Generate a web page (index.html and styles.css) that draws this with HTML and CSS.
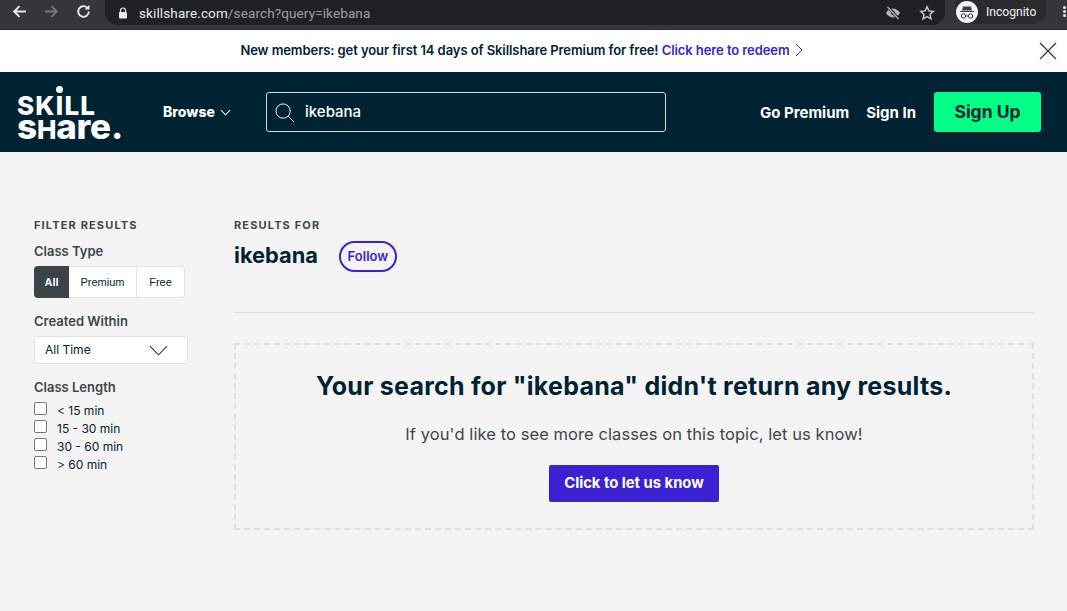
FILE: index.html
```html
<!DOCTYPE html>
<html lang="en">
<head>
<meta charset="utf-8">
<title>Skillshare search</title>
<link rel="stylesheet" href="styles.css">
</head>
<body>
<div class="chrome">
  <div class="chrome-nav">
    <svg class="cicon" viewBox="0 0 16 16"><path d="M14 8H3M8 3 3 8l5 5" fill="none" stroke="#e8eaed" stroke-width="1.8"/></svg>
    <svg class="cicon" viewBox="0 0 16 16"><path d="M2 8h11M8 3l5 5-5 5" fill="none" stroke="#77787b" stroke-width="1.8"/></svg>
    <svg class="cicon" viewBox="0 0 16 16"><path d="M13 8a5 5 0 1 1-1.5-3.6" fill="none" stroke="#e8eaed" stroke-width="1.8"/><path d="M13.6 1.6v4.6H9z" fill="#e8eaed"/></svg>
  </div>
  <div class="omnibox">
    <svg class="lock" viewBox="0 0 10 12"><path d="M2.5 5V3.5a2.5 2.5 0 0 1 5 0V5" fill="none" stroke="#e8eaed" stroke-width="1.2"/><rect x="1" y="5" width="8" height="6.5" rx="1" fill="#e8eaed"/></svg>
    <span class="url"><span class="url-host">skillshare.com</span>/search?query=ikebana</span>
    <span class="omni-right">
      <svg class="omni-icon" viewBox="0 0 16 16"><path d="M1 8s2.6-4.5 7-4.5S15 8 15 8s-2.600 4.500-7 4.500S1 8 1 8z" fill="#b5b6b8"/><circle cx="8" cy="8" r="2" fill="#202124"/><path d="M3 2l10.500 12" stroke="#202124" stroke-width="3"/><path d="M2.500 2l11 12" stroke="#b5b6b8" stroke-width="1.300"/></svg>
      <svg class="omni-icon" viewBox="0 0 16 16"><path d="M8 1.800l1.900 4.100 4.400.5-3.300 3 .9 4.400L8 11.600 4.100 13.800 5 9.400l-3.300-3 4.400-.5z" fill="none" stroke="#c4c5c7" stroke-width="1.500"/></svg>
    </span>
  </div>
  <div class="incognito">
    <span class="incog-badge">
      <svg viewBox="0 0 22 22"><path d="M4 10h14v1H4zM7 5.500h8l1 4H6z" fill="#3c4043"/><circle cx="7.500" cy="15" r="2.200" fill="none" stroke="#3c4043" stroke-width="1"/><circle cx="14.500" cy="15" r="2.200" fill="none" stroke="#3c4043" stroke-width="1"/><path d="M9.700 15h2.600" stroke="#3c4043"/></svg>
    </span>
    <span>Incognito</span>
  </div>
  <div class="kebab"><i></i><i></i><i></i></div>
</div>

<div class="promo">
  <span class="promo-text">New members: get your first 14 days of Skillshare Premium for free! <a class="promo-link">Click here to redeem</a></span>
  <svg class="promo-arrow" viewBox="0 0 8 14"><path d="M1 1l6 6-6 6" fill="none" stroke="#3a21d4" stroke-width="1"/></svg>
  <svg class="promo-close" viewBox="0 0 18 18"><path d="M1 1l16 16M17 1 1 17" stroke="#333" stroke-width="1.100"/></svg>
</div>

<header class="nav">
  <div class="logo">
    <div class="logo-top">SK<span class="logo-i">I</span>LL</div>
    <div class="logo-bottom">s<span class="logo-cap">H</span>are.</div>
  </div>
  <div class="browse"><span>Browse</span>
    <svg viewBox="0 0 12 7"><path d="M1 1l5 5 5-5" fill="none" stroke="#fff" stroke-width="1.100"/></svg>
  </div>
  <div class="search">
    <svg viewBox="0 0 22 22"><circle cx="9.500" cy="9.500" r="7.500" fill="none" stroke="#fff" stroke-width="1"/><path d="M15 15l6 6" stroke="#fff" stroke-width="1"/></svg>
    <span class="search-text">ikebana</span>
  </div>
  <div class="nav-right">
    <a class="nav-link">Go Premium</a>
    <a class="nav-link">Sign In</a>
    <a class="signup">Sign Up</a>
  </div>
</header>

<main class="page">
  <aside class="filters">
    <h4 class="caps">FILTER RESULTS</h4>
    <div class="f-label first">Class Type</div>
    <div class="segments">
      <span class="seg seg-all">All</span>
      <span class="seg seg-prem">Premium</span>
      <span class="seg seg-free">Free</span>
    </div>
    <div class="f-label created">Created Within</div>
    <div class="select"><span>All Time</span>
      <svg viewBox="0 0 20 11"><path d="M1 1l9 9 9-9" fill="none" stroke="#1c3440" stroke-width="1.100"/></svg>
    </div>
    <div class="f-label length">Class Length</div>
    <div class="checks">
      <label class="check"><input type="checkbox"><span>&lt; 15 min</span></label>
      <label class="check"><input type="checkbox"><span>15 - 30 min</span></label>
      <label class="check"><input type="checkbox"><span>30 - 60 min</span></label>
      <label class="check"><input type="checkbox"><span>&gt; 60 min</span></label>
    </div>
  </aside>
  <section class="results">
    <h4 class="caps">RESULTS FOR</h4>
    <div class="term-row">
      <h2 class="term">ikebana</h2>
      <a class="follow">Follow</a>
    </div>
    <div class="rule"></div>
    <div class="empty">
      <h3 class="empty-title">Your search for "ikebana" didn't return any results.</h3>
      <p class="empty-sub">If you'd like to see more classes on this topic, let us know!</p>
      <a class="cta">Click to let us know</a>
    </div>
  </section>
</main>
</body>
</html>
```
FILE: styles.css
```css
* { box-sizing: border-box; }
html, body { margin: 0; height: 100%; }
body { width: 1067px; height: 611px; overflow: hidden; background: #f4f4f4; font-family: "Inter", "Liberation Sans", sans-serif; color: #002333; }
h2, h3, h4, p { margin: 0; }

.chrome { height: 30px; background: #35363a; display: flex; align-items: flex-start; color: #fff; border-bottom: 1px solid #2a2b2e; }
.chrome-nav { display: flex; width: 105px; padding: 3px 0 0 11px; gap: 15px; }
.cicon { width: 17px; height: 17px; }
.omnibox { width: 840px; height: 25px; background: #202124; border-radius: 0 0 13px 13px; display: flex; align-items: center; padding: 0 10px 0 13px; }
.lock { width: 10px; height: 12px; margin-right: 11px; }
.url { font: 13.5px/16px "Roboto", sans-serif; color: #9aa0a6; letter-spacing: .12px; }
.url-host { color: #e8eaed; }
.omni-right { margin-left: auto; display: flex; gap: 18px; align-items: center; }
.omni-icon { width: 16px; height: 16px; }
.incognito { margin-left: 10px; width: 91px; height: 24px; background: #2a2b2e; border-radius: 0 0 12px 12px; display: flex; align-items: center; font: 12.1px/16px "Roboto", sans-serif; gap: 8px; padding-left: 1px; color: #f1f3f4; }
.incog-badge { width: 22px; height: 22px; border-radius: 50%; background: #f1f3f4; display: block; flex: none; }
.incog-badge svg { display: block; }
.kebab { margin-left: 10px; padding: 6px 0 0 7px; display: flex; flex-direction: column; gap: 1px; }
.kebab i { width: 3px; height: 3px; border-radius: 50%; background: #e8eaed; display: block; }

.promo { height: 42px; background: #fff; position: relative; display: flex; align-items: center; justify-content: center; padding: 0 24px 3px 0; font-size: 13px; font-weight: 600; letter-spacing: -.08px; color: #002333; }
.promo-link { color: #3a21d4; }
.promo-arrow { width: 8px; height: 14px; margin-left: 5px; }
.promo-close { position: absolute; right: 10px; top: 12px; width: 18px; height: 18px; }

.nav { height: 80px; background: #002333; display: flex; align-items: center; color: #fff; padding: 0 26px 0 17px; }
.logo { width: 146px; display: flex; flex-direction: column; font-weight: 800; padding-top: 11px; }
.logo-top { font-size: 26px; line-height: 22px; letter-spacing: 1.200px; position: relative; }
.logo-i { position: relative; }
.logo-i::before { content: ""; position: absolute; left: 50%; top: -4px; width: 7px; height: 7px; margin-left: -4px; border-radius: 50%; background: #fff; }
.logo-bottom { font-size: 35px; line-height: 22px; letter-spacing: -.2px; margin-top: -2px; }
.logo-cap { font-size: 26px; }
.browse { width: 103px; font-size: 14px; font-weight: 800; display: flex; align-items: center; gap: 5px; padding-bottom: 2px; }
.browse svg { width: 11px; height: 7px; margin-top: 2px; }
.search { width: 400px; height: 40px; border: 1px solid #d7dadb; border-radius: 3px; display: flex; align-items: center; padding: 0 0 0 7px; gap: 10px; font-size: 15px; font-weight: 500; }
.search svg { width: 21px; height: 21px; }
.search-text { padding-bottom: 2px; }
.nav-right { margin-left: auto; display: flex; align-items: center; }
.nav-link { font-size: 15px; font-weight: 700; margin-right: 17px; }
.signup { width: 107px; height: 40px; margin-left: 1px; padding-bottom: 2px; background: #00ff84; color: #002333; border-radius: 3px; display: flex; align-items: center; justify-content: center; font-size: 17.5px; font-weight: 700; }

.page { display: flex; padding: 66px 33px 0 34px; }
.filters { width: 200px; flex: none; color: #3c474d; }
.caps { font-size: 11px; line-height: 14px; font-weight: 700; letter-spacing: 1.150px; color: #3c474d; }
.f-label { font-size: 13px; line-height: 16px; font-weight: 600; color: #3c474d; }
.first { margin-top: 11px; }
.segments { display: flex; width: 151px; height: 32px; margin-top: 7px; border: 1px solid #e4e4e6; border-radius: 4px; background: #fff; font: 11px "Liberation Sans", sans-serif; color: #002333; }
.seg { display: flex; align-items: center; justify-content: center; }
.seg-all { width: 35px; margin: -1px 0 -1px -1px; background: #394348; color: #fff; border-radius: 4px 0 0 4px; font-weight: 700; }
.seg-prem { width: 68px; border-right: 1px solid #e4e4e6; }
.seg-free { flex: 1; }
.created { margin-top: 15px; }
.select { width: 154px; height: 28px; margin-top: 7px; border: 1px solid #e1e1e3; border-radius: 3px; background: #fff; display: flex; align-items: center; padding: 0 19px 1px 10px; justify-content: space-between; font-size: 12px; color: #002333; }
.select svg { width: 19px; height: 11px; margin-top: 1px; }
.length { margin-top: 15px; }
.checks { margin-top: 6px; display: flex; flex-direction: column; }
.check { display: flex; align-items: flex-start; height: 18px; font-size: 12px; color: #002333; }
.check input { width: 13px; height: 13px; margin: 1px 10px 0 0; appearance: none; background: #fff; border: 1px solid #767676; border-radius: 2px; flex: none; }
.check span { line-height: 18px; margin-top: 1px; }

.results { width: 800px; flex: none; }
.term-row { display: flex; align-items: center; margin-top: 9px; gap: 21px; height: 31px; }
.term { font-size: 21.800px; line-height: 31px; font-weight: 700; color: #002333; padding-bottom: 2px; }
.follow { width: 58px; height: 31px; padding-bottom: 1px; border: 2px solid #3a21d4; border-radius: 16px; display: flex; align-items: center; justify-content: center; color: #3a21d4; font-size: 13px; font-weight: 600; }
.rule { height: 1px; background: #dfdfe1; margin-top: 40px; }
.empty { height: 187px; margin-top: 30px; border: 2px dashed #e0e0e3; display: flex; flex-direction: column; align-items: center; padding-top: 26px; }
.empty-title { font-size: 25px; line-height: 30px; font-weight: 700; letter-spacing: .25px; color: #002333; white-space: nowrap; }
.empty-sub { margin-top: 22px; font-size: 16.500px; line-height: 22px; letter-spacing: .08px; color: #3c474d; }
.cta { margin-top: 20px; width: 170px; height: 37px; padding-bottom: 2px; background: #3a21d4; color: #fff; border-radius: 2px; display: flex; align-items: center; justify-content: center; font-size: 14.800px; font-weight: 700; }
```
